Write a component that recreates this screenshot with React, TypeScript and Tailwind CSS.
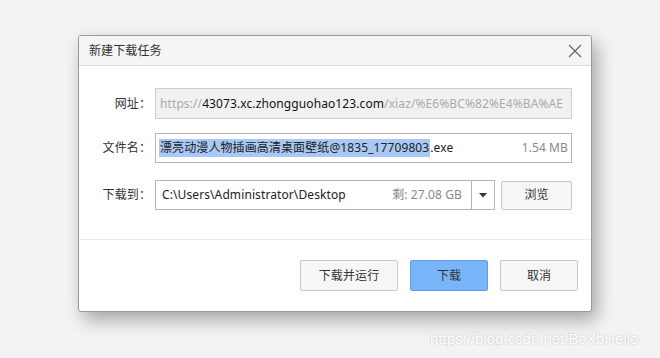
import React from "react";

const font = { fontFamily: '"Noto Sans", "Noto Sans CJK SC", sans-serif' };

export default function App() {
  return (
    <div className="relative w-[660px] h-[358px] bg-[#f3f3f3] overflow-hidden text-[12px] tracking-[0.1px] text-[#333]" style={font}>
      <div className="pl-[78px] pt-[35px]">
        <div className="w-[514px] h-[277px] flex flex-col border border-[#9a9a9a] rounded-[3px] bg-white shadow-[5px_8px_18px_rgba(0,0,0,0.32)] overflow-hidden">
          <div className="h-[30px] shrink-0 flex items-center justify-between bg-[#f5f5f5] border-b border-[#dcdcdc] pl-[10px] pr-[9px]">
            <span className="text-[#333] leading-none">新建下载任务</span>
            <svg width="14" height="14" viewBox="0 0 14 14" className="mt-[1px]">
              <path d="M1 1 L13 13 M13 1 L1 13" stroke="#666" strokeWidth="1.2" fill="none" />
            </svg>
          </div>
          <div className="flex flex-col pt-[22px]">
            <div className="flex items-center h-[31px]">
              <div className="w-[72px] text-right shrink-0">网址：</div>
              <div className="ml-[4px] w-[417px] h-[31px] border border-[#cfcfcf] bg-[#f1f1f1] flex items-center pl-[4px] overflow-hidden whitespace-nowrap">
                <span className="text-[#aaa]">https://</span>
                <span className="text-[#111]">43073.xc.zhongguohao123.com</span>
                <span className="text-[#aaa]">/xiaz/%E6%BC%82%E4%BA%AE</span>
              </div>
            </div>
            <div className="flex items-center h-[30px] mt-[14px]">
              <div className="w-[72px] text-right shrink-0">文件名：</div>
              <div className="ml-[4px] w-[417px] h-[30px] border border-[#b4b4b4] bg-white flex items-center pl-[3px] pr-[3px] whitespace-nowrap">
                <span className="bg-[#a8c9f5] text-[#222] px-[1px]">漂亮动漫人物插画高清桌面壁纸@1835_17709803</span>
                <span className="text-[#222]">.exe</span>
                <span className="ml-auto text-[#888]">1.54 MB</span>
              </div>
            </div>
            <div className="flex items-center h-[30px] mt-[17px]">
              <div className="w-[72px] text-right shrink-0">下载到：</div>
              <div className="ml-[4px] w-[340px] h-[30px] border border-[#b4b4b4] bg-white flex items-center whitespace-nowrap">
                <span className="pl-[6px] text-[#222]">C:\Users\Administrator\Desktop</span>
                <span className="ml-auto pr-[9px] text-[#888]">剩: 27.08 GB</span>
                <div className="w-[23px] h-full border-l border-[#b4b4b4] flex items-center justify-center">
                  <svg width="8" height="5" viewBox="0 0 8 5">
                    <path d="M0 0 L8 0 L4 4.5 Z" fill="#333" />
                  </svg>
                </div>
              </div>
              <button className="ml-[6px] w-[71px] h-[29px] border border-[#c8c8c8] rounded-[2px] bg-[#f6f6f6] text-[#333] flex items-center justify-center">浏览</button>
            </div>
            <div className="mt-[29px] h-px bg-[#ececec]" />
            <div className="flex justify-end pt-[20px] pr-[13px] gap-[12px]">
              <button className="w-[98px] h-[31px] border border-[#c8c8c8] rounded-[2px] bg-[#f6f6f6] text-[#333] flex items-center justify-center">下载并运行</button>
              <button className="w-[78px] h-[31px] border border-[#5b9eea] rounded-[2px] bg-[#7ab5fa] text-[#333] flex items-center justify-center">下载</button>
              <button className="w-[78px] h-[31px] border border-[#c8c8c8] rounded-[2px] bg-[#f6f6f6] text-[#333] flex items-center justify-center">取消</button>
            </div>
          </div>
        </div>
      </div>
      <div
        className="absolute left-[430px] top-[328px] text-[15px] tracking-normal text-white whitespace-nowrap"
        style={{ fontFamily: '"Liberation Sans", Arial, sans-serif', textShadow: "0 0 2px rgba(0,0,0,0.25)" }}
      >
        https://blog.csdn.net/BcXbHello
      </div>
    </div>
  );
}
